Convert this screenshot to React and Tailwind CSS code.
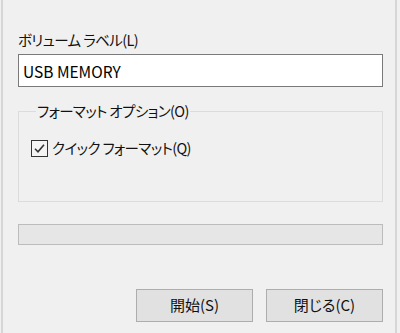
import React from 'react';

const jp = "font-['Noto_Sans_CJK_JP','Noto_Sans',sans-serif] [font-feature-settings:'palt']";

const CheckBox = () => (
  <span className="flex h-[17px] w-[17px] items-center justify-center border-[1.5px] border-[#333333] bg-[#f4f4f4]">
    <svg width="13" height="13" viewBox="0 0 13 13" fill="none">
      <path d="M2 6.8 L5 9.8 L11 2.8" stroke="#333333" strokeWidth="1.6" />
    </svg>
  </span>
);

const App = () => {
  return (
    <div className={`h-[333px] w-[400px] overflow-hidden bg-[#f0f0f0] text-[#111111] ${jp}`}>
      <div className="flex h-full flex-col border-x-[2px] border-[#d6d6d6] ml-[1px] mr-[3px] pl-[15px] pr-[12px]">
        <label className="mt-[30px] text-[14.5px] leading-[20px] tracking-[-0.6px]">ボリューム ラベル(L)</label>
        <input
          type="text"
          defaultValue="USB MEMORY"
          className={`mt-[4px] h-[33px] w-[365px] border border-[#7a7a7a] bg-white px-[4px] text-[15.5px] text-black outline-none ${jp}`}
        />

        <fieldset className="mt-[14px] h-[101px] w-[365px] border border-[#dcdcdc] px-[12px] pt-0">
          <legend className="ml-[5px] px-[1px] text-[14.5px] leading-[20px] tracking-[-0.6px]">フォーマット オプション(O)</legend>
          <div className="mt-[17px] flex items-center gap-[4px]">
            <CheckBox />
            <span className="text-[14.5px] leading-[20px] tracking-[-0.6px]">クイック フォーマット(Q)</span>
          </div>
        </fieldset>

        <div className="mt-[22px] h-[21px] w-[365px] border border-[#bcbcbc] bg-[#e6e6e6]" />

        <div className="mt-[44px] flex w-[365px] justify-end gap-[13px]">
          <button className={`h-[33px] w-[117px] border border-[#adadad] bg-[#e1e1e1] text-[15px] ${jp}`}>
            開始(S)
          </button>
          <button className={`h-[33px] w-[117px] border border-[#adadad] bg-[#e1e1e1] text-[15px] ${jp}`}>
            閉じる(C)
          </button>
        </div>
      </div>
    </div>
  );
};

export default App;
